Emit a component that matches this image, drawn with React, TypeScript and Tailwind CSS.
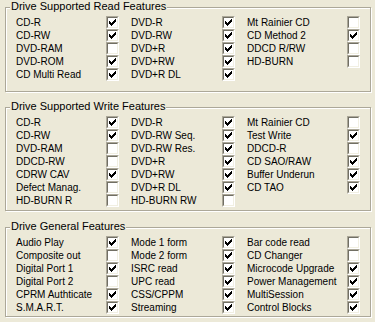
import React from 'react';

type Item = { label: string; on: boolean } | null;

const READ: Item[][] = [
  [{ label: 'CD-R', on: true }, { label: 'DVD-R', on: true }, { label: 'Mt Rainier CD', on: false }],
  [{ label: 'CD-RW', on: true }, { label: 'DVD-RW', on: true }, { label: 'CD Method 2', on: true }],
  [{ label: 'DVD-RAM', on: false }, { label: 'DVD+R', on: true }, { label: 'DDCD R/RW', on: false }],
  [{ label: 'DVD-ROM', on: true }, { label: 'DVD+RW', on: true }, { label: 'HD-BURN', on: false }],
  [{ label: 'CD Multi Read', on: true }, { label: 'DVD+R DL', on: true }, null],
];

const WRITE: Item[][] = [
  [{ label: 'CD-R', on: true }, { label: 'DVD-R', on: true }, { label: 'Mt Rainier CD', on: false }],
  [{ label: 'CD-RW', on: true }, { label: 'DVD-RW Seq.', on: true }, { label: 'Test Write', on: true }],
  [{ label: 'DVD-RAM', on: false }, { label: 'DVD-RW Res.', on: true }, { label: 'DDCD-R', on: false }],
  [{ label: 'DDCD-RW', on: false }, { label: 'DVD+R', on: true }, { label: 'CD SAO/RAW', on: true }],
  [{ label: 'CDRW CAV', on: true }, { label: 'DVD+RW', on: true }, { label: 'Buffer Underun', on: true }],
  [{ label: 'Defect Manag.', on: false }, { label: 'DVD+R DL', on: true }, { label: 'CD TAO', on: true }],
  [{ label: 'HD-BURN R', on: false }, { label: 'HD-BURN RW', on: false }, null],
];

const GENERAL: Item[][] = [
  [{ label: 'Audio Play', on: true }, { label: 'Mode 1 form', on: true }, { label: 'Bar code read', on: false }],
  [{ label: 'Composite out', on: false }, { label: 'Mode 2 form', on: true }, { label: 'CD Changer', on: false }],
  [{ label: 'Digital Port 1', on: true }, { label: 'ISRC read', on: true }, { label: 'Microcode Upgrade', on: true }],
  [{ label: 'Digital Port 2', on: false }, { label: 'UPC read', on: true }, { label: 'Power Management', on: true }],
  [{ label: 'CPRM Authticate', on: true }, { label: 'CSS/CPPM', on: true }, { label: 'MultiSession', on: true }],
  [{ label: 'S.M.A.R.T.', on: true }, { label: 'Streaming', on: true }, { label: 'Control Blocks', on: true }],
];

// classic 7x7 check glyph, one 3px-tall column per x
const CHECK_COLS = [2, 3, 4, 3, 2, 1, 0];

function CheckBox({ on }: { on: boolean }) {
  return (
    <span className="block w-[13px] h-[13px] shrink-0 border border-t-[#ACA899] border-l-[#ACA899] border-r-white border-b-white">
      <span className="block w-[11px] h-[11px] border border-t-[#716F64] border-l-[#716F64] border-r-[#F1EFE2] border-b-[#F1EFE2] bg-white p-px">
        {on && (
          <svg width="7" height="7" viewBox="0 0 7 7" shapeRendering="crispEdges" className="block">
            {CHECK_COLS.map((y, x) => (
              <rect key={x} x={x} y={y} width="1" height="3" fill="#000" />
            ))}
          </svg>
        )}
      </span>
    </span>
  );
}

function Group({ title, rows, height, className = '' }: { title: string; rows: Item[][]; height: string; className?: string }) {
  return (
    <div
      className={`relative w-[366px] border border-[#ACA899] shadow-[inset_1px_1px_0_#fff,1px_1px_0_#fff] pt-[8px] pl-[10px] ${height} ${className}`}
    >
      <span className="absolute -top-[8px] left-[4px] px-[1px] bg-[#ECE9D8] text-[11px] leading-[13px] text-black whitespace-nowrap">
        {title}
      </span>
      <div className="grid grid-cols-[103px_104px_113px] gap-x-[12px]">
        {rows.flat().map((item, i) =>
          item ? (
            <div key={i} className="flex items-center justify-between h-[13px]">
              <span className="text-[10px] leading-[13px] text-black whitespace-nowrap">{item.label}</span>
              <CheckBox on={item.on} />
            </div>
          ) : (
            <div key={i} className="h-[13px]" />
          )
        )}
      </div>
    </div>
  );
}

export default function App() {
  return (
    <div
      className="w-[375px] h-[322px] bg-[#ECE9D8] pl-[5px] pt-[7px] overflow-hidden"
      style={{ fontFamily: '"Liberation Sans", Arial, sans-serif' }}
    >
      <Group title="Drive Supported Read Features" rows={READ} height="h-[85px]" />
      <Group title="Drive Supported Write Features" rows={WRITE} height="h-[104px]" className="mt-[15px]" />
      <Group title="Drive General Features" rows={GENERAL} height="h-[90px]" className="mt-[16px]" />
    </div>
  );
}
